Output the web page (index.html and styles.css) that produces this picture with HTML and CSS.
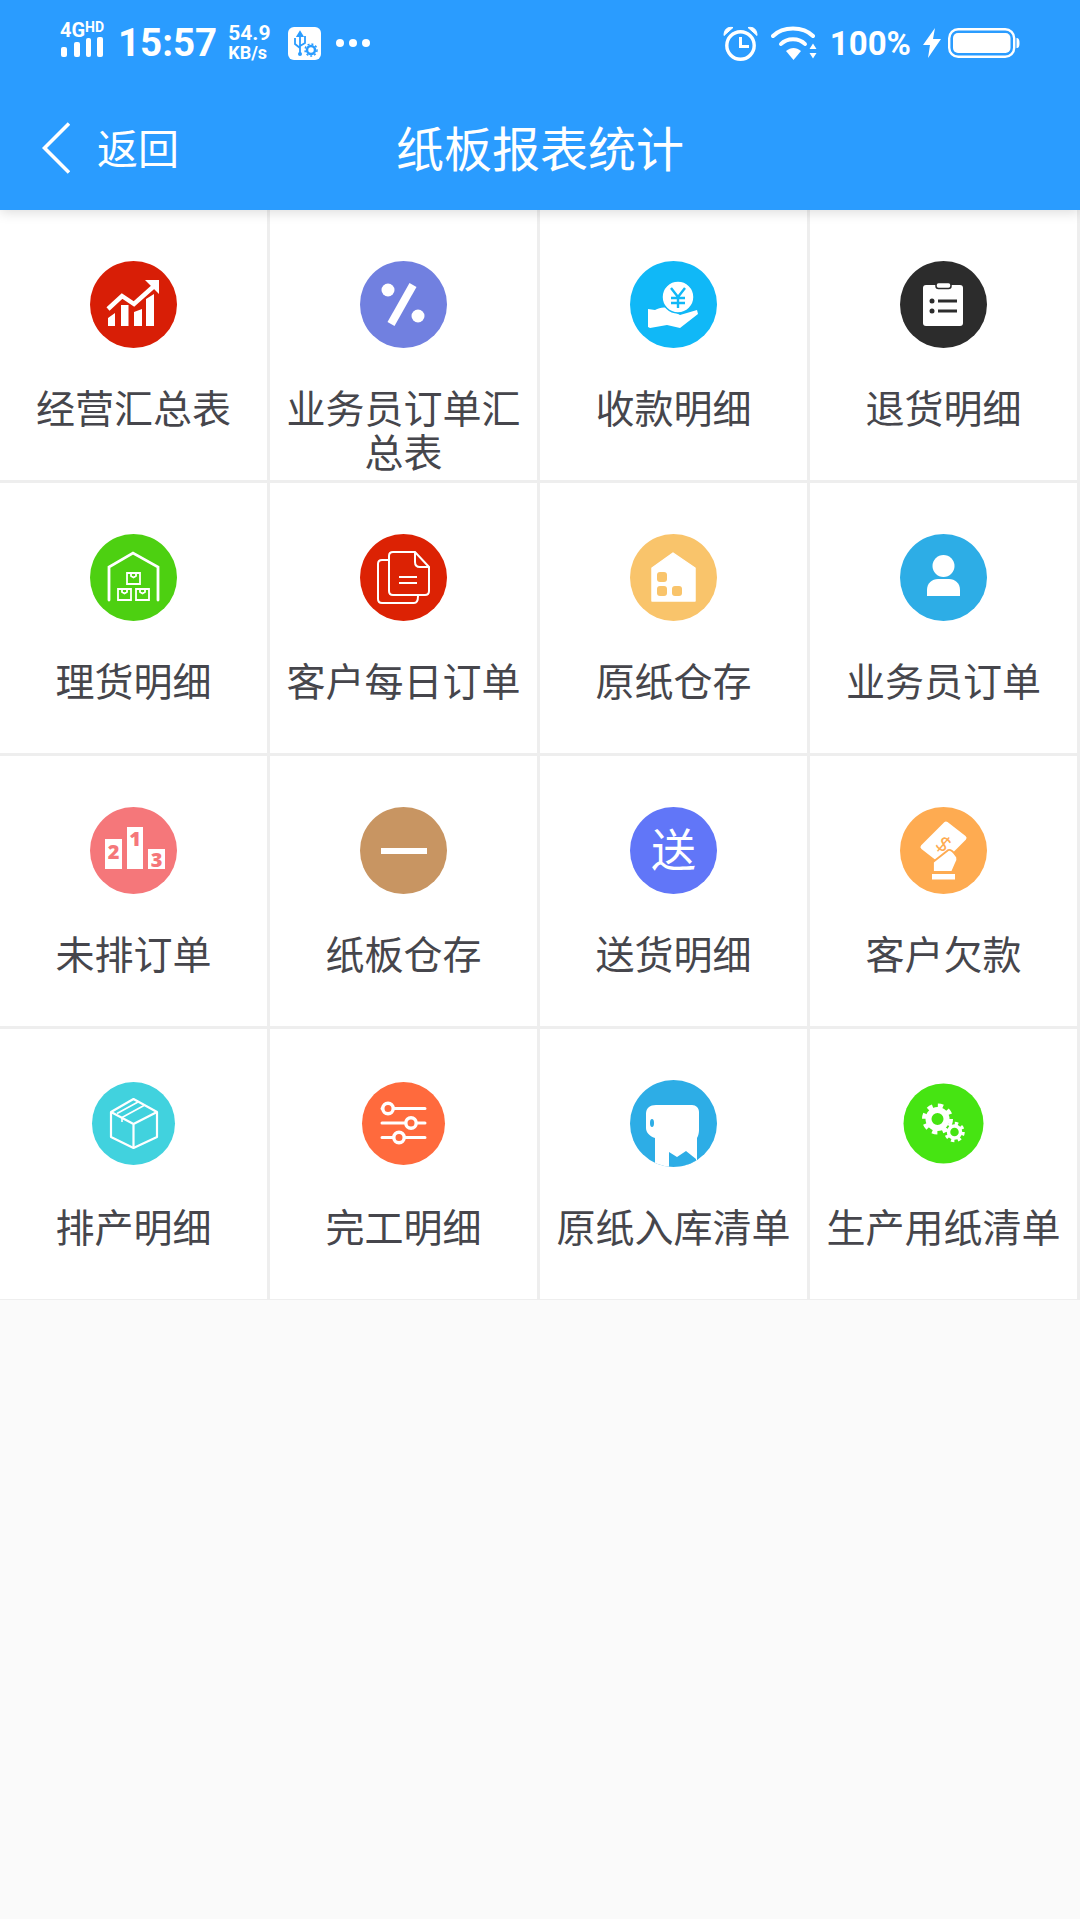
FILE: index.html
```html
<!DOCTYPE html>
<html lang="zh-CN">
<head>
  <meta charset="UTF-8">
  <title>纸板报表统计</title>
  <link rel="stylesheet" href="styles.css">
</head>
<body>
  <header class="app-header">
    <!-- Status bar -->
    <div class="status-bar">
      <svg class="signal" width="46" height="50" viewBox="0 0 46 50" fill="#fff">
        <text x="0" y="19" class="signal-4g">4G</text>
        <text x="25" y="14" class="signal-hd">HD</text>
        <rect x="1" y="29" width="6" height="10" rx="2"/>
        <rect x="14" y="24" width="6" height="15" rx="2"/>
        <rect x="26" y="20" width="5" height="19" rx="2"/>
        <rect x="37" y="19" width="6" height="20" rx="2"/>
      </svg>
      <span class="clock">15:57</span>
      <span class="speed"><b>54.9</b><small>KB/s</small></span>
      <svg class="usb" width="33" height="33" viewBox="0 0 33 33">
        <rect width="33" height="33" rx="6" fill="#fff"/>
        <path d="M12 5v22M12 5l-2.500 4h5zM7 11v6l5 4M17 9v7l-5 3" fill="none" stroke="#2a9cff" stroke-width="1.800"/>
        <circle cx="12" cy="27" r="2" fill="#2a9cff"/>
        <circle cx="23" cy="23" r="4" fill="none" stroke="#2a9cff" stroke-width="2.500"/>
        <circle cx="23" cy="23" r="6" fill="none" stroke="#2a9cff" stroke-width="1.500" stroke-dasharray="2 2"/>
      </svg>
      <span class="dots"><i></i><i></i><i></i></span>

      <div class="status-right">
        <svg width="35" height="35" viewBox="0 0 35 35" fill="none" stroke="#fff">
          <circle cx="17.500" cy="19.500" r="13.700" stroke-width="3.400"/>
          <path d="M17.500 11v9.500h8.500" stroke-width="3"/>
          <path d="M1 9.500C1 4 4 0.500 10 1.500zM34 9.500C34 4 31 0.500 25 1.500z" fill="#fff" stroke-width="1"/>
        </svg>
        <svg class="wifi" width="46" height="34" viewBox="0 0 46 34" fill="none" stroke="#fff" stroke-width="4" stroke-linecap="round">
          <path d="M2 10C12 0 32 0 42 10"/>
          <path d="M10 18C16 11.500 28 11.500 34 18"/>
          <path d="M15 25C20 21 25 21 30 25L22.500 34Z" fill="#fff" stroke="none"/>
          <path d="M38.500 23l3.500-5.500 3.500 5.500zM38.500 27l3.500 5.500 3.500-5.500z" fill="#fff" stroke="none"/>
        </svg>
        <span class="battery-text">100%</span>
        <svg class="bolt" width="18" height="30" viewBox="0 0 18 30" fill="#fff">
          <path d="M12 0L0 17H7L5 30L18 11H10Z"/>
        </svg>
        <svg width="72" height="30" viewBox="0 0 72 30">
          <rect x="1.200" y="1.200" width="65" height="27.600" rx="9" fill="none" stroke="#fff" stroke-width="2.400"/>
          <rect x="5" y="5" width="57.500" height="20" rx="5" fill="#fff"/>
          <path d="M68.500 10C71 10 71.500 12 71.500 15S71 20 68.500 20Z" fill="#fff"/>
        </svg>
      </div>
    </div>

    <!-- Title bar -->
    <nav class="title-bar">
      <div class="back">
        <svg width="28" height="52" viewBox="0 0 28 52" fill="none" stroke="#fff" stroke-width="3.600">
          <path d="M27 1.500L2.500 26L27 50.500"/>
        </svg>
        <span>返回</span>
      </div>
      <h1>纸板报表统计</h1>
    </nav>
  </header>

  <!-- Report grid -->
  <main class="report-grid">
    <div class="report-item">
      <svg class="icon" viewBox="0 0 87 87">
        <circle cx="43.500" cy="43.500" r="43.500" fill="#d81e06"/>
        <g fill="#fff">
          <path d="M18 57l7-5v13h-7zM31 44h7.500v21h-7.500zM44 51l8-3v17h-8zM56 38l8-5v32h-8z"/>
          <path d="M55 19h14v14l-4.500-4.500z"/>
        </g>
        <path d="M18 48L32 35L44 43L63 26" fill="none" stroke="#fff" stroke-width="4.500"/>
      </svg>
      <span class="label">经营汇总表</span>
    </div>
    <div class="report-item">
      <svg class="icon" viewBox="0 0 87 87">
        <circle cx="43.500" cy="43.500" r="43.500" fill="#7180e0"/>
        <circle cx="28" cy="29" r="6.500" fill="#fff"/>
        <circle cx="58" cy="55" r="6.500" fill="#fff"/>
        <path d="M53 24L31 63" stroke="#fff" stroke-width="8"/>
      </svg>
      <span class="label">业务员订单汇总表</span>
    </div>
    <div class="report-item">
      <svg class="icon" viewBox="0 0 87 87">
        <circle cx="43.500" cy="43.500" r="43.500" fill="#10b8f7"/>
        <path d="M18 48L25 49C29 47 33 46 37 47L50 54L67 49L68 53L50 67L37 64L20 67L18 66Z" fill="#fff"/>
        <circle cx="48" cy="36" r="16" fill="#fff" stroke="#10b8f7" stroke-width="1.500"/>
        <path d="M41 27l7 9 7-9M48 36v11M41 37h14M41 42h14" fill="none" stroke="#10b8f7" stroke-width="2.400"/>
      </svg>
      <span class="label">收款明细</span>
    </div>
    <div class="report-item">
      <svg class="icon" viewBox="0 0 87 87">
        <circle cx="43.500" cy="43.500" r="43.500" fill="#2c2c2c"/>
        <rect x="23" y="24" width="40" height="41" rx="3" fill="#fff"/>
        <rect x="36" y="21.500" width="15" height="6" rx="2.500" fill="#fff" stroke="#2c2c2c" stroke-width="1.500"/>
        <path d="M38 40h19M38 50h19" stroke="#2c2c2c" stroke-width="3"/>
        <circle cx="32" cy="40" r="2.500" fill="#2c2c2c"/>
        <circle cx="32" cy="50" r="2.500" fill="#2c2c2c"/>
      </svg>
      <span class="label">退货明细</span>
    </div>

    <div class="report-item">
      <svg class="icon" viewBox="0 0 87 87">
        <circle cx="43.500" cy="43.500" r="43.500" fill="#4dd011"/>
        <g fill="none" stroke="#fff">
          <path d="M19 66V33L43 19L68 33V66" stroke-width="2.800" stroke-linecap="round"/>
          <path d="M37 39h13v11h-13zM41 39v3l2.500 1.500L46 42v-3M28 55h13v11h-13zM32 55v3l2.500 1.500L37 58v-3M46 55h13v11h-13zM50 55v3l2.500 1.500L55 58v-3" stroke-width="1.800"/>
        </g>
      </svg>
      <span class="label">理货明细</span>
    </div>
    <div class="report-item">
      <svg class="icon" viewBox="0 0 87 87">
        <circle cx="43.500" cy="43.500" r="43.500" fill="#dc2204"/>
        <g fill="none" stroke="#fff" stroke-width="2">
          <path d="M29 26H22C19 26 18 28 18 30V65C18 68 20 69 22 69H54C57 69 58 67 58 62"/>
          <path d="M33 18H55L69 33V57C69 60 67 61 65 61H33C30 61 29 59 29 57V22C29 19 31 18 33 18Z"/>
          <path d="M55 18V28C55 31 57 33 60 33H69"/>
          <path d="M39 43h18M39 49h18"/>
        </g>
      </svg>
      <span class="label">客户每日订单</span>
    </div>
    <div class="report-item">
      <svg class="icon" viewBox="0 0 87 87">
        <circle cx="43.500" cy="43.500" r="43.500" fill="#f9c46b"/>
        <path d="M43 19L65 34V67H22V34Z" fill="#fff" stroke="#fff" stroke-width="1.500" stroke-linejoin="round"/>
        <g fill="#f9c46b">
          <rect x="27" y="38" width="10" height="10" rx="3"/>
          <rect x="27" y="52" width="10" height="10" rx="3"/>
          <rect x="42" y="52" width="10" height="10" rx="3"/>
        </g>
      </svg>
      <span class="label">原纸仓存</span>
    </div>
    <div class="report-item">
      <svg class="icon" viewBox="0 0 87 87">
        <circle cx="43.500" cy="43.500" r="43.500" fill="#2dade6"/>
        <circle cx="43.500" cy="32" r="11" fill="#fff"/>
        <path d="M27 62V56C27 49 32 45 38 45H49C55 45 60 49 60 56V62Z" fill="#fff"/>
      </svg>
      <span class="label">业务员订单</span>
    </div>

    <div class="report-item">
      <svg class="icon" viewBox="0 0 87 87">
        <circle cx="43.500" cy="43.500" r="43.500" fill="#f5777a"/>
        <g fill="#fff">
          <rect x="15" y="32" width="17" height="30"/>
          <rect x="37" y="20" width="16" height="42"/>
          <rect x="58" y="42" width="17" height="20"/>
        </g>
        <g class="podium-num" fill="#f5777a">
          <text x="23.500" y="52">2</text>
          <text x="45" y="39">1</text>
          <text x="66.500" y="60">3</text>
        </g>
      </svg>
      <span class="label">未排订单</span>
    </div>
    <div class="report-item">
      <svg class="icon" viewBox="0 0 87 87">
        <circle cx="43.500" cy="43.500" r="43.500" fill="#c89562"/>
        <rect x="21" y="41" width="46" height="6" fill="#fff"/>
      </svg>
      <span class="label">纸板仓存</span>
    </div>
    <div class="report-item">
      <svg class="icon" viewBox="0 0 87 87">
        <circle cx="43.500" cy="43.500" r="43.500" fill="#6176f8"/>
        <text x="43.500" y="60" class="icon-char" fill="#fff">送</text>
      </svg>
      <span class="label">送货明细</span>
    </div>
    <div class="report-item">
      <svg class="icon" viewBox="0 0 87 87">
        <circle cx="43.500" cy="43.500" r="43.500" fill="#feab51"/>
        <path d="M46 17L64 31L41 54L23 40Z" fill="#fff" stroke="#fff" stroke-linejoin="round" stroke-width="5"/>
        <text x="43" y="45" class="money" fill="#feab51" transform="rotate(40 43 38)">$</text>
        <path d="M33 62V55L47 44C49 42 52 43 54 46L57 50C58 52 57 54 56 56L52 65H33Z" fill="#fff" stroke="#feab51" stroke-width="1.800"/>
        <rect x="32" y="67" width="23" height="5.500" fill="#fff"/>
      </svg>
      <span class="label">客户欠款</span>
    </div>

    <div class="report-item">
      <svg class="icon" viewBox="0 0 87 87">
        <circle cx="43.500" cy="43.500" r="41.500" fill="#41d2de"/>
        <g fill="none" stroke="#fff" stroke-width="2.200" stroke-linejoin="round">
          <path d="M43.500 19L67 32V57L43.500 68L21 57V32Z"/>
          <path d="M21 32L43.500 44L67 32M43.500 44V68"/>
          <path d="M54 25.500L32 37.500V42M48 22L27 33.500" stroke-width="1.600"/>
        </g>
      </svg>
      <span class="label">排产明细</span>
    </div>
    <div class="report-item">
      <svg class="icon" viewBox="0 0 87 87">
        <circle cx="43.500" cy="43.500" r="41.500" fill="#ff6a3d"/>
        <path d="M22 28.500h43M22 43h43M22 57.500h43" stroke="#fff" stroke-width="3" stroke-linecap="round"/>
        <g fill="#ff6a3d" stroke="#fff" stroke-width="3.400">
          <circle cx="28" cy="28.500" r="5.200"/>
          <circle cx="51" cy="43" r="5.200"/>
          <circle cx="39" cy="57.500" r="5.200"/>
        </g>
      </svg>
      <span class="label">完工明细</span>
    </div>
    <div class="report-item">
      <svg class="icon" viewBox="0 0 87 87">
        <defs>
          <clipPath id="roll-clip"><circle cx="43.500" cy="43.500" r="43.500"/></clipPath>
        </defs>
        <circle cx="43.500" cy="43.500" r="43.500" fill="#2dade6"/>
        <g clip-path="url(#roll-clip)">
          <path d="M26 25H62C66 25 69 28 69 32V50C69 55 67 58 67 58V87H25V58C19 56 16 52 16 48V34C16 28 20 25 26 25Z" fill="#fff"/>
          <path d="M39 72L47 77L56 71L66 79V87H39Z" fill="#2dade6"/>
          <ellipse cx="22" cy="43" rx="2" ry="4" fill="#2dade6"/>
        </g>
      </svg>
      <span class="label">原纸入库清单</span>
    </div>
    <div class="report-item">
      <svg class="icon" viewBox="0 0 87 87">
        <circle cx="43.500" cy="43.500" r="40" fill="#46e412"/>
        <g fill="none" stroke="#fff">
          <circle cx="37.500" cy="39" r="9" stroke-width="6"/>
          <circle cx="37.500" cy="39" r="13" stroke-width="5" stroke-dasharray="5.100 5.100"/>
          <circle cx="54.500" cy="52" r="6" stroke-width="3.500"/>
          <circle cx="54.500" cy="52" r="8.500" stroke-width="3.500" stroke-dasharray="3.340 3.340"/>
        </g>
      </svg>
      <span class="label">生产用纸清单</span>
    </div>
  </main>
</body>
</html>
```
FILE: styles.css
```css
/* Page */
body {
  margin: 0;
  background: #fafafa;
  font-family: "Noto Sans CJK SC", "Noto Sans", sans-serif;
  color: #46464c;
}

/* Header */
.app-header {
  position: relative;
  height: 210px;
  background: #2a9cff;
  color: #fff;
  box-shadow: 0 2px 12px rgba(0, 0, 0, 0.15);
}

.status-bar {
  display: flex;
  align-items: center;
  height: 86px;
  padding: 0 60px;
  font-family: Roboto, sans-serif;
  font-weight: 700;
}

.signal-4g {
  font: 700 20px Roboto, sans-serif;
}

.signal-hd {
  font: 700 14px Roboto, sans-serif;
}

.clock {
  margin-left: 12px;
  font-size: 38.5px;
  line-height: 1;
}

.speed {
  display: flex;
  flex-direction: column;
  margin-left: 11px;
  line-height: 19px;
}

.speed b {
  font-size: 21px;
  font-weight: 700;
}

.speed small {
  font-size: 18px;
}

.usb {
  margin-left: 18px;
}

.dots {
  display: flex;
  gap: 5px;
  margin-left: 15px;
}

.dots i {
  width: 8px;
  height: 8px;
  border-radius: 50%;
  background: #fff;
}

.status-right {
  display: flex;
  align-items: center;
  margin-left: auto;
}

.wifi {
  margin-left: 13px;
}

.battery-text {
  margin-left: 13px;
  font-size: 33px;
  line-height: 1;
}

.bolt {
  margin-left: 12px;
  margin-right: 7px;
}

.title-bar {
  display: grid;
  grid-template-columns: 1fr auto 1fr;
  align-items: center;
  height: 124px;
}

.title-bar h1 {
  margin: 0;
  padding-bottom: 4px;
  font-size: 48px;
  font-weight: 400;
  line-height: 1;
}

.back {
  display: flex;
  align-items: center;
  gap: 27px;
  padding-left: 42px;
  font-size: 41px;
}

.back span {
  padding-bottom: 4px;
}

/* Report grid */
.report-grid {
  display: grid;
  grid-template-columns: repeat(4, 270px);
  grid-template-rows: repeat(3, 273px) 271px;
}

.report-item {
  display: flex;
  flex-direction: column;
  align-items: center;
  box-sizing: border-box;
  padding: 51px 10px 0;
  background: #fff;
  border-right: 3px solid #eee;
  border-bottom: 3px solid #eee;
  overflow: hidden;
}

.report-item:nth-last-child(-n+4) {
  border-bottom-width: 1px;
}

.icon {
  flex: none;
  width: 87px;
  height: 87px;
}

.label {
  margin-top: 36px;
  font-size: 39px;
  line-height: 44px;
  text-align: center;
}

/* Text inside icons */
.podium-num text {
  font: 800 20px "Open Sans", sans-serif;
  text-anchor: middle;
}

.icon-char {
  font: 400 45px "Noto Sans CJK SC", sans-serif;
  text-anchor: middle;
}

.money {
  font: 400 22px "Open Sans", sans-serif;
  text-anchor: middle;
}
```
